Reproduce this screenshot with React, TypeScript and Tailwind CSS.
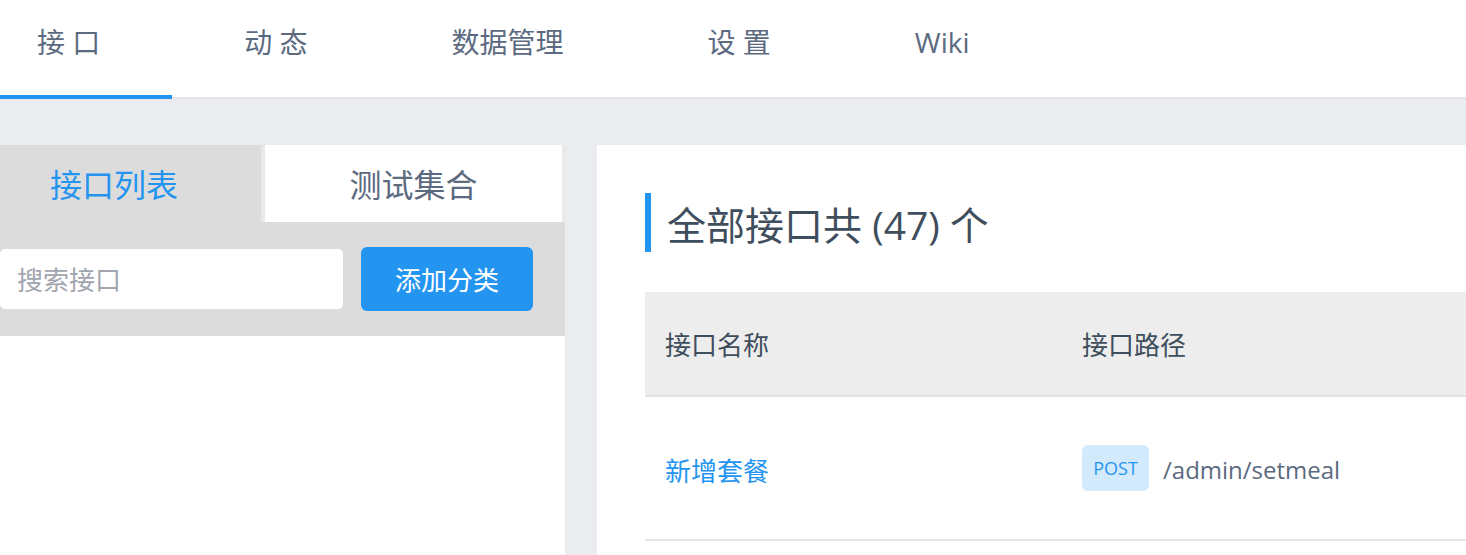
import React from "react";

const FONT = { fontFamily: '"Open Sans", "Noto Sans CJK SC", sans-serif' };

export default function App() {
  const tabs = ["接 口", "动 态", "数据管理", "设 置", "Wiki"];
  return (
    <div style={FONT} className="w-[1466px] h-[555px] overflow-hidden bg-[#ebecf0] flex flex-col">
      <nav className="relative z-10 h-[97px] bg-white shadow-[0_1px_4px_rgba(0,0,0,0.06)] flex shrink-0">
        {tabs.map((t, i) => (
          <div
            key={t}
            className="relative h-full pl-[37px] pr-[72px] mr-[35px] pt-[21px] text-[28px] leading-[42px] text-[#5c6a80] whitespace-pre"
          >
            {t}
            {i === 0 && <div className="absolute left-0 right-0 bottom-[-2px] h-[4px] bg-[#2395f1]" />}
          </div>
        ))}
      </nav>

      <div className="flex flex-1 mt-[48px] min-h-0">
        {/* Left panel */}
        <div className="w-[565px] shrink-0 flex flex-col bg-white">
          <div className="h-[77px] flex bg-[#e9e9ea]">
            <div className="w-[261px] bg-[#dcdcdc] flex items-center pl-[50px] pt-[2px] text-[32px] text-[#2395f1]">
              接口列表
            </div>
            <div className="ml-[4px] w-[297px] bg-white flex items-center justify-center pt-[2px] text-[32px] text-[#5c6a80]">
              测试集合
            </div>
          </div>
          <div className="h-[114px] bg-[#dcdcdc] flex items-center">
            <div className="w-[343px] h-[60px] bg-white rounded-[5px] flex items-center pl-[17px] pt-[3px] text-[26px] text-[#a0a5ae]">
              搜索接口
            </div>
            <button className="ml-[18px] w-[172px] h-[64px] bg-[#2395f1] rounded-[6px] text-white text-[26px] pt-[3px] flex items-center justify-center">
              添加分类
            </button>
          </div>
          <div className="flex-1 bg-white" />
        </div>

        {/* Main panel */}
        <div className="ml-[32px] flex-1 bg-white pl-[48px] pt-[48px]">
          <div className="flex items-center h-[59px]">
            <div className="w-[6px] h-full bg-[#2395f1]" />
            <div className="ml-[16px] pt-[3px] text-[39px] text-[#3f4e5c] leading-none">全部接口共 (47) 个</div>
          </div>
          <div className="mt-[40px]">
            <div className="h-[105px] bg-[#ededed] border-b-2 border-[#e3e3e3] flex items-center text-[26px] text-[#3f4e5c]">
              <div className="w-[417px] pl-[20px] pt-[4px]">接口名称</div>
              <div className="pl-[20px] pt-[4px]">接口路径</div>
            </div>
            <div className="h-[144px] border-b-2 border-[#e6e6e6] flex items-center">
              <div className="w-[417px] pl-[20px] pt-[6px] text-[26px] text-[#2395f1]">新增套餐</div>
              <div className="pl-[20px] flex items-center">
                <span className="h-[46px] w-[67px] rounded-[6px] bg-[#d3e9fc] text-[#2395f1] text-[18px] flex items-center justify-center">
                  POST
                </span>
                <span className="ml-[14px] pt-[4px] text-[24px] text-[#5c6a80]">/admin/setmeal</span>
              </div>
            </div>
          </div>
        </div>
      </div>
    </div>
  );
}
